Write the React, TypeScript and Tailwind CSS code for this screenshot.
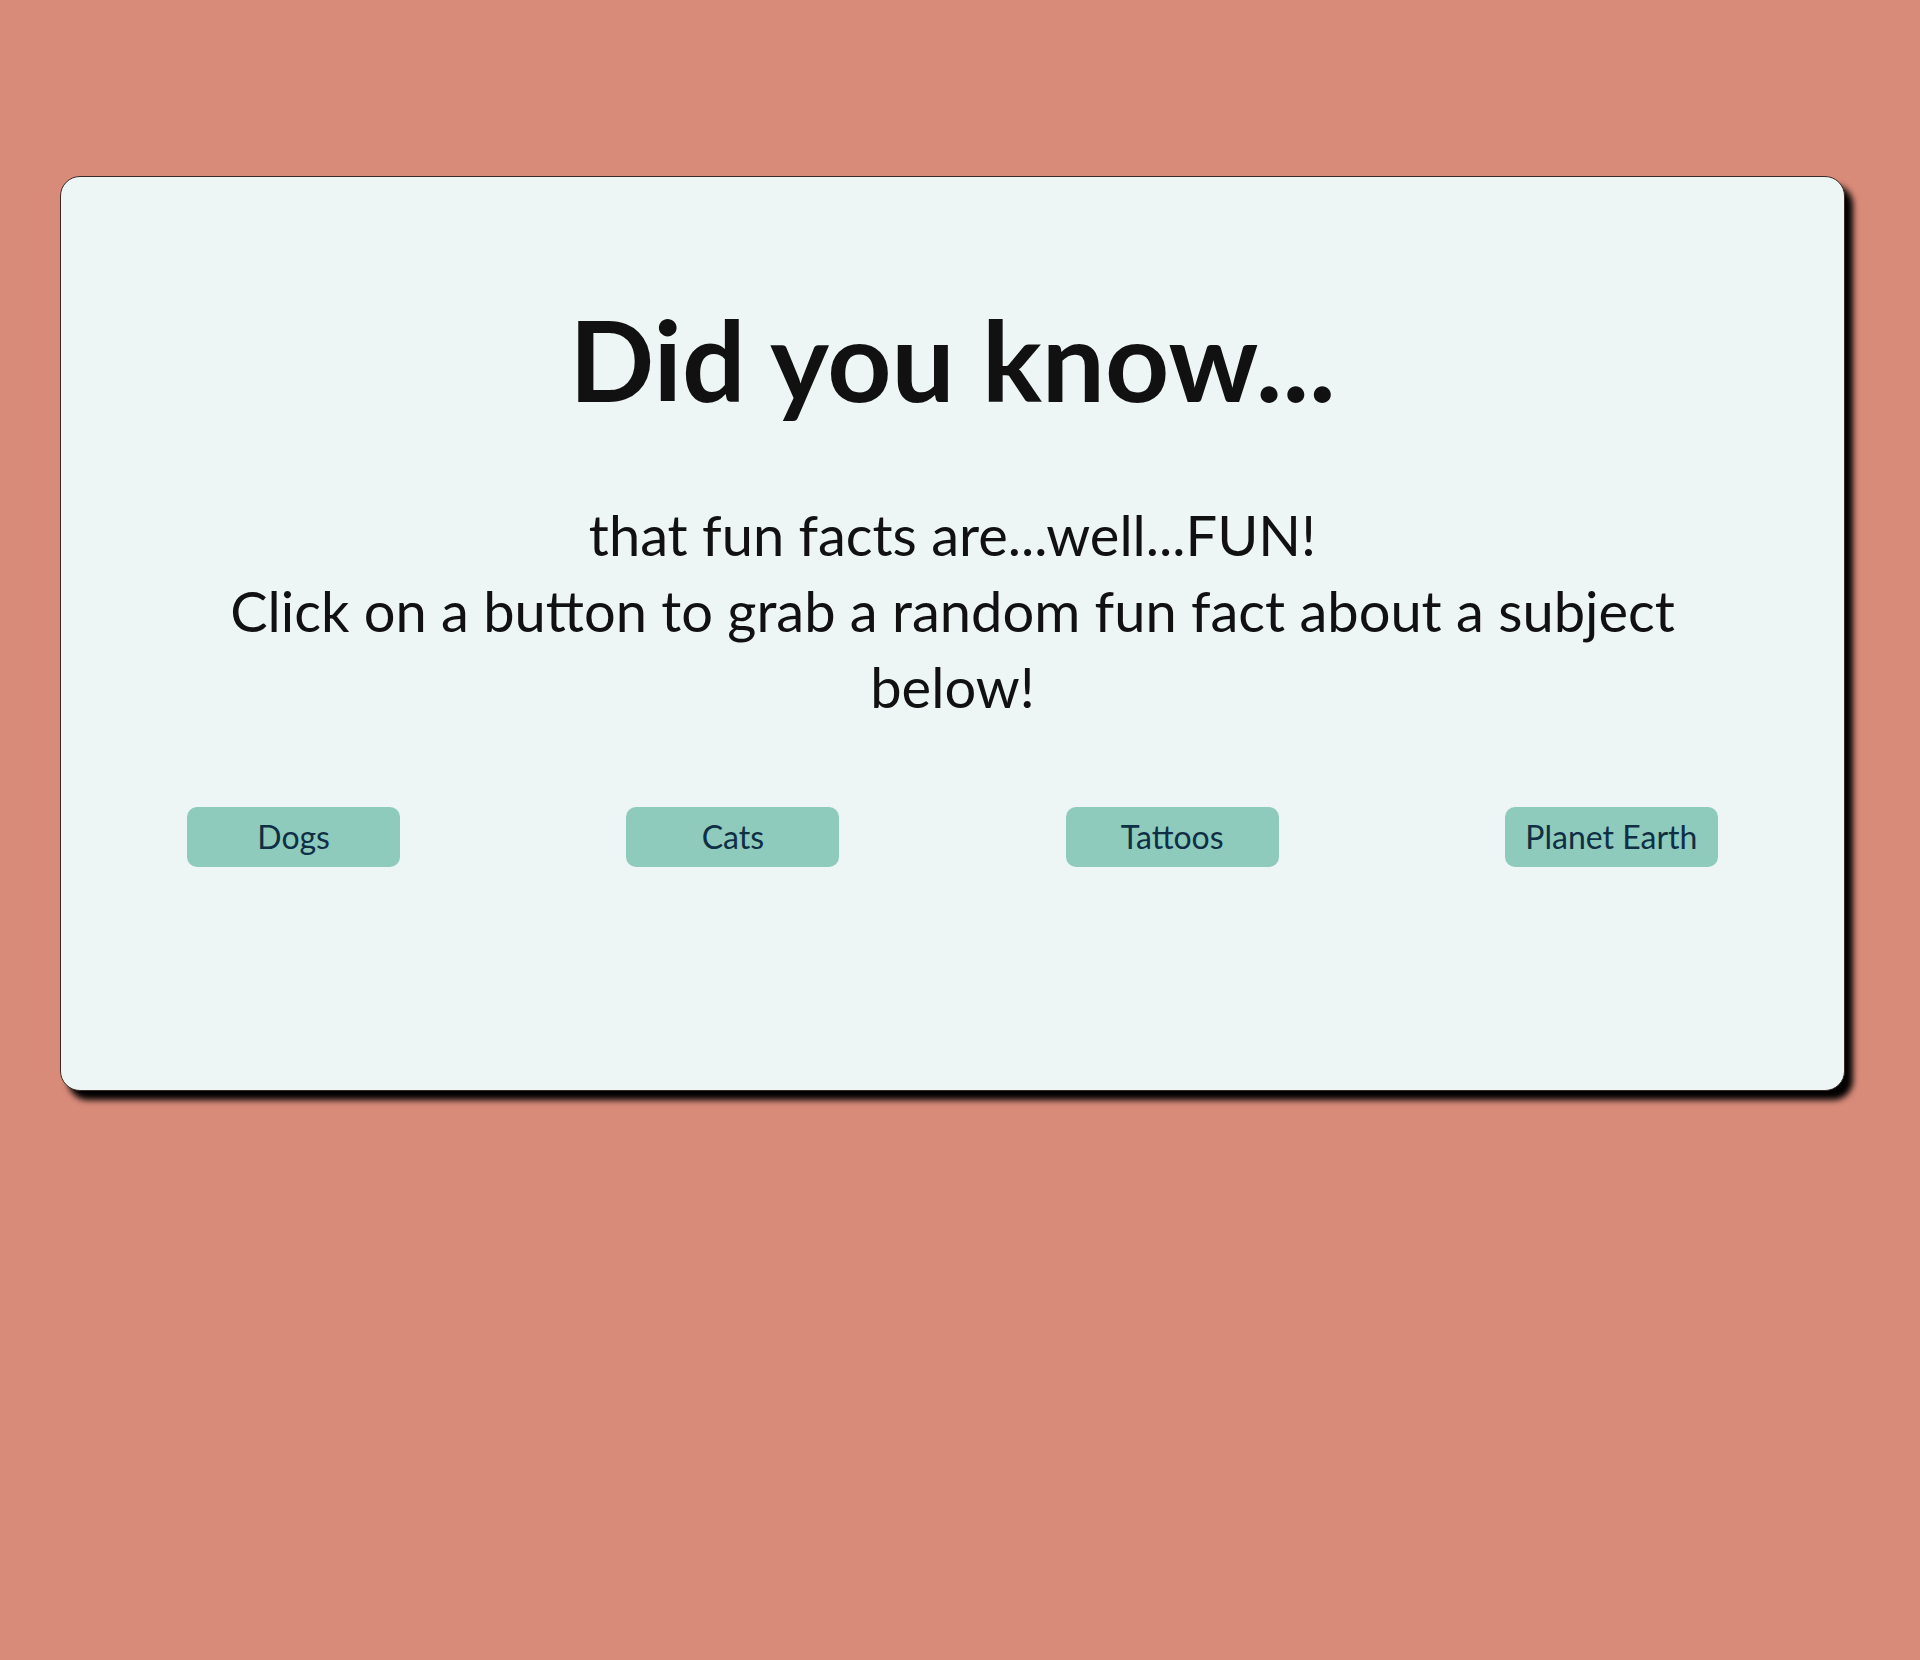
const subjects = ["Dogs", "Cats", "Tattoos", "Planet Earth"];

export default function App() {
  return (
    <div
      className="min-h-[1660px] bg-[#d98b7a] pt-[176px] pl-[60px] pr-[75px]"
      style={{ fontFamily: "Lato, 'Noto Sans', sans-serif" }}
    >
      <div className="w-[1785px] rounded-[20px] border border-[#3a2a26] bg-[#eef5f5] pt-[115px] pb-[223px] text-center text-[#111] shadow-[8px_9px_6px_#000]">
        <h1 className="text-[112px] leading-[1.2] font-bold">Did you know...</h1>

        <p className="mx-auto mt-[71px] max-w-[1520px] text-[56px] leading-[76px]">
          that fun facts are...well...FUN!
          <br />
          Click on a button to grab a random fun fact about a subject below!
        </p>

        <div className="mt-[82px] flex justify-around px-[13px]">
          {subjects.map((s) => (
            <button
              key={s}
              className="h-[60px] w-[213px] rounded-[10px] bg-[#8fcbbd] text-[32px] text-[#0f2f45]"
            >
              {s}
            </button>
          ))}
        </div>
      </div>
    </div>
  );
}
